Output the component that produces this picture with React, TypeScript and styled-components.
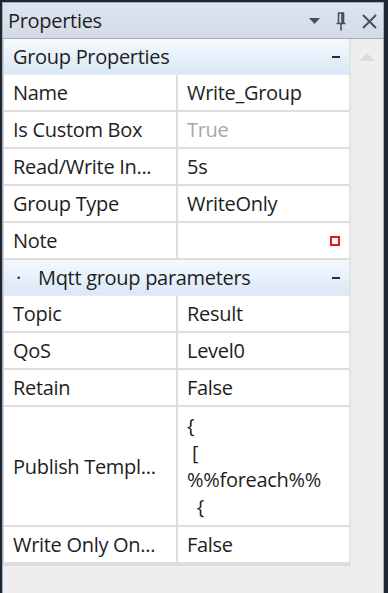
import React from 'react'
import styled, { createGlobalStyle } from 'styled-components'

const GlobalStyle = createGlobalStyle`
  html, body {
    margin: 0;
    padding: 0;
    background: #1d2733;
  }
  body {
    font-family: "Open Sans", "Noto Sans", sans-serif;
  }
`

interface Row {
  name: string
  value?: string
  lines?: string[]
  muted?: boolean
  marker?: boolean
}

interface Group {
  title: string
  dot?: boolean
  rows: Row[]
}

const groups: Group[] = [
  {
    title: 'Group Properties',
    rows: [
      { name: 'Name', value: 'Write_Group' },
      { name: 'Is Custom Box', value: 'True', muted: true },
      { name: 'Read/Write In...', value: '5s' },
      { name: 'Group Type', value: 'WriteOnly' },
      { name: 'Note', value: '', marker: true },
    ],
  },
  {
    title: 'Mqtt group parameters',
    dot: true,
    rows: [
      { name: 'Topic', value: 'Result' },
      { name: 'QoS', value: 'Level0' },
      { name: 'Retain', value: 'False' },
      { name: 'Publish Templ...', lines: ['{', '\u00a0[', '%%foreach%%', '\u00a0\u00a0{'] },
      { name: 'Write Only On...', value: 'False' },
    ],
  },
]

const App: React.FC = () => {
  return (
    <>
      <GlobalStyle />
      <Window>
        <Panel>
          <TitleBar>
            <Title>Properties</Title>
            <TitleButtons>
              <svg width="11" height="7" viewBox="0 0 11 7">
                <path d="M0 0 H11 L5.5 6 Z" fill="#4b4f55" />
              </svg>
              <svg width="10" height="19" viewBox="0 0 10 19">
                <path d="M2 1 H8 M2.5 1 V11 M7.5 1 V11 M6 1 V11 M0.5 11.5 H9.5 M5 12 V18.5" stroke="#4b4f55" strokeWidth="1.6" fill="none" />
              </svg>
              <svg width="15" height="15" viewBox="0 0 15 15">
                <path d="M1 1 L14 14 M14 1 L1 14" stroke="#4b4f55" strokeWidth="2" fill="none" />
              </svg>
            </TitleButtons>
          </TitleBar>
          <Body>
            <Grid>
              {groups.map((g) => (
                <React.Fragment key={g.title}>
                  <GroupHeader>
                    <GroupTitle>
                      {g.dot && <Dot>·</Dot>}
                      {g.title}
                    </GroupTitle>
                    <Collapse />
                  </GroupHeader>
                  {g.rows.map((r) => (
                    <PropRow key={r.name} tall={!!r.lines}>
                      <NameCell>{r.name}</NameCell>
                      <ValueCell muted={r.muted} multi={!!r.lines}>
                        {r.lines ? r.lines.map((l, i) => <div key={i}>{l}</div>) : r.value}
                        {r.marker && <Marker />}
                      </ValueCell>
                    </PropRow>
                  ))}
                </React.Fragment>
              ))}
            </Grid>
            <ScrollBar>
              <svg width="16" height="8" viewBox="0 0 16 8">
                <path d="M0 8 L8 0 L16 8 Z" fill="#dcdcdc" />
              </svg>
            </ScrollBar>
          </Body>
        </Panel>
      </Window>
    </>
  )
}

const Window = styled.div`
  width: 388px;
  height: 593px;
  display: flex;
  background: #1d2733;
`

const Panel = styled.div`
  width: 380px;
  height: 591px;
  margin-top: 2px;
  margin-left: 2px;
  border: 1px solid #a4abb6;
  border-bottom: none;
  display: flex;
  flex-direction: column;
  background: #eeeeee;
`

const TitleBar = styled.div`
  height: 35px;
  flex-shrink: 0;
  display: flex;
  align-items: center;
  justify-content: space-between;
  padding: 0 6px 0 5px;
  background: linear-gradient(#dde4ee, #d3dbe8);
  border-bottom: 1px solid #a4abb6;
`

const Title = styled.span`
  font-size: 20px;
  color: #1e1e1e;
  letter-spacing: -0.3px;
`

const TitleButtons = styled.div`
  display: flex;
  align-items: center;
  gap: 16px;
  padding-top: 2px;
`

const Body = styled.div`
  flex: 1;
  display: flex;
  align-items: flex-start;
`

const Grid = styled.div`
  width: 345px;
  display: flex;
  flex-direction: column;
  border-left: 1px solid #d0d0d0;
  border-right: 2px solid #e2e2e2;
  border-bottom: 2px solid #dcdcdc;
  background: #ffffff;
`

const GroupHeader = styled.div`
  height: 35px;
  display: flex;
  align-items: center;
  justify-content: space-between;
  padding: 0 9px 0 9px;
  background: linear-gradient(#f6f9fd, #d9e7f7);
  border-bottom: 1px solid #e6ecf3;
  & + & {
    height: 36px;
  }
`

const GroupTitle = styled.span`
  font-size: 20px;
  color: #1e1e1e;
  letter-spacing: -0.3px;
  white-space: pre;
`

const Dot = styled.span`
  display: inline-block;
  width: 25px;
  padding-left: 3px;
  box-sizing: border-box;
`

const Collapse = styled.span`
  width: 8px;
  height: 2px;
  background: #2b2b2b;
`

const PropRow = styled.div<{ tall?: boolean }>`
  height: ${(p) => (p.tall ? 118 : 35)}px;
  display: flex;
  border-bottom: 2px solid #dedede;
  &:nth-child(7) {
    border-bottom: 3px solid #dedede;
  }
`

const NameCell = styled.div`
  width: 163px;
  flex-shrink: 0;
  display: flex;
  align-items: center;
  padding-left: 9px;
  border-right: 2px solid #dedede;
  font-size: 20px;
  color: #1e1e1e;
  letter-spacing: -0.3px;
  white-space: nowrap;
`

const ValueCell = styled.div<{ muted?: boolean; multi?: boolean }>`
  flex: 1;
  display: flex;
  flex-direction: ${(p) => (p.multi ? 'column' : 'row')};
  justify-content: ${(p) => (p.multi ? 'center' : 'flex-start')};
  align-items: ${(p) => (p.multi ? 'flex-start' : 'center')};
  padding: 0 9px 0 9px;
  font-size: 20px;
  line-height: ${(p) => (p.multi ? '27px' : 'normal')};
  letter-spacing: -0.3px;
  color: ${(p) => (p.muted ? '#a8a8a8' : '#1e1e1e')};
  white-space: pre;
`

const Marker = styled.span`
  margin-left: auto;
  width: 6px;
  height: 6px;
  border: 2px solid #e8141b;
`

const ScrollBar = styled.div`
  flex: 1;
  display: flex;
  justify-content: center;
  padding-top: 14px;
`

export default App
